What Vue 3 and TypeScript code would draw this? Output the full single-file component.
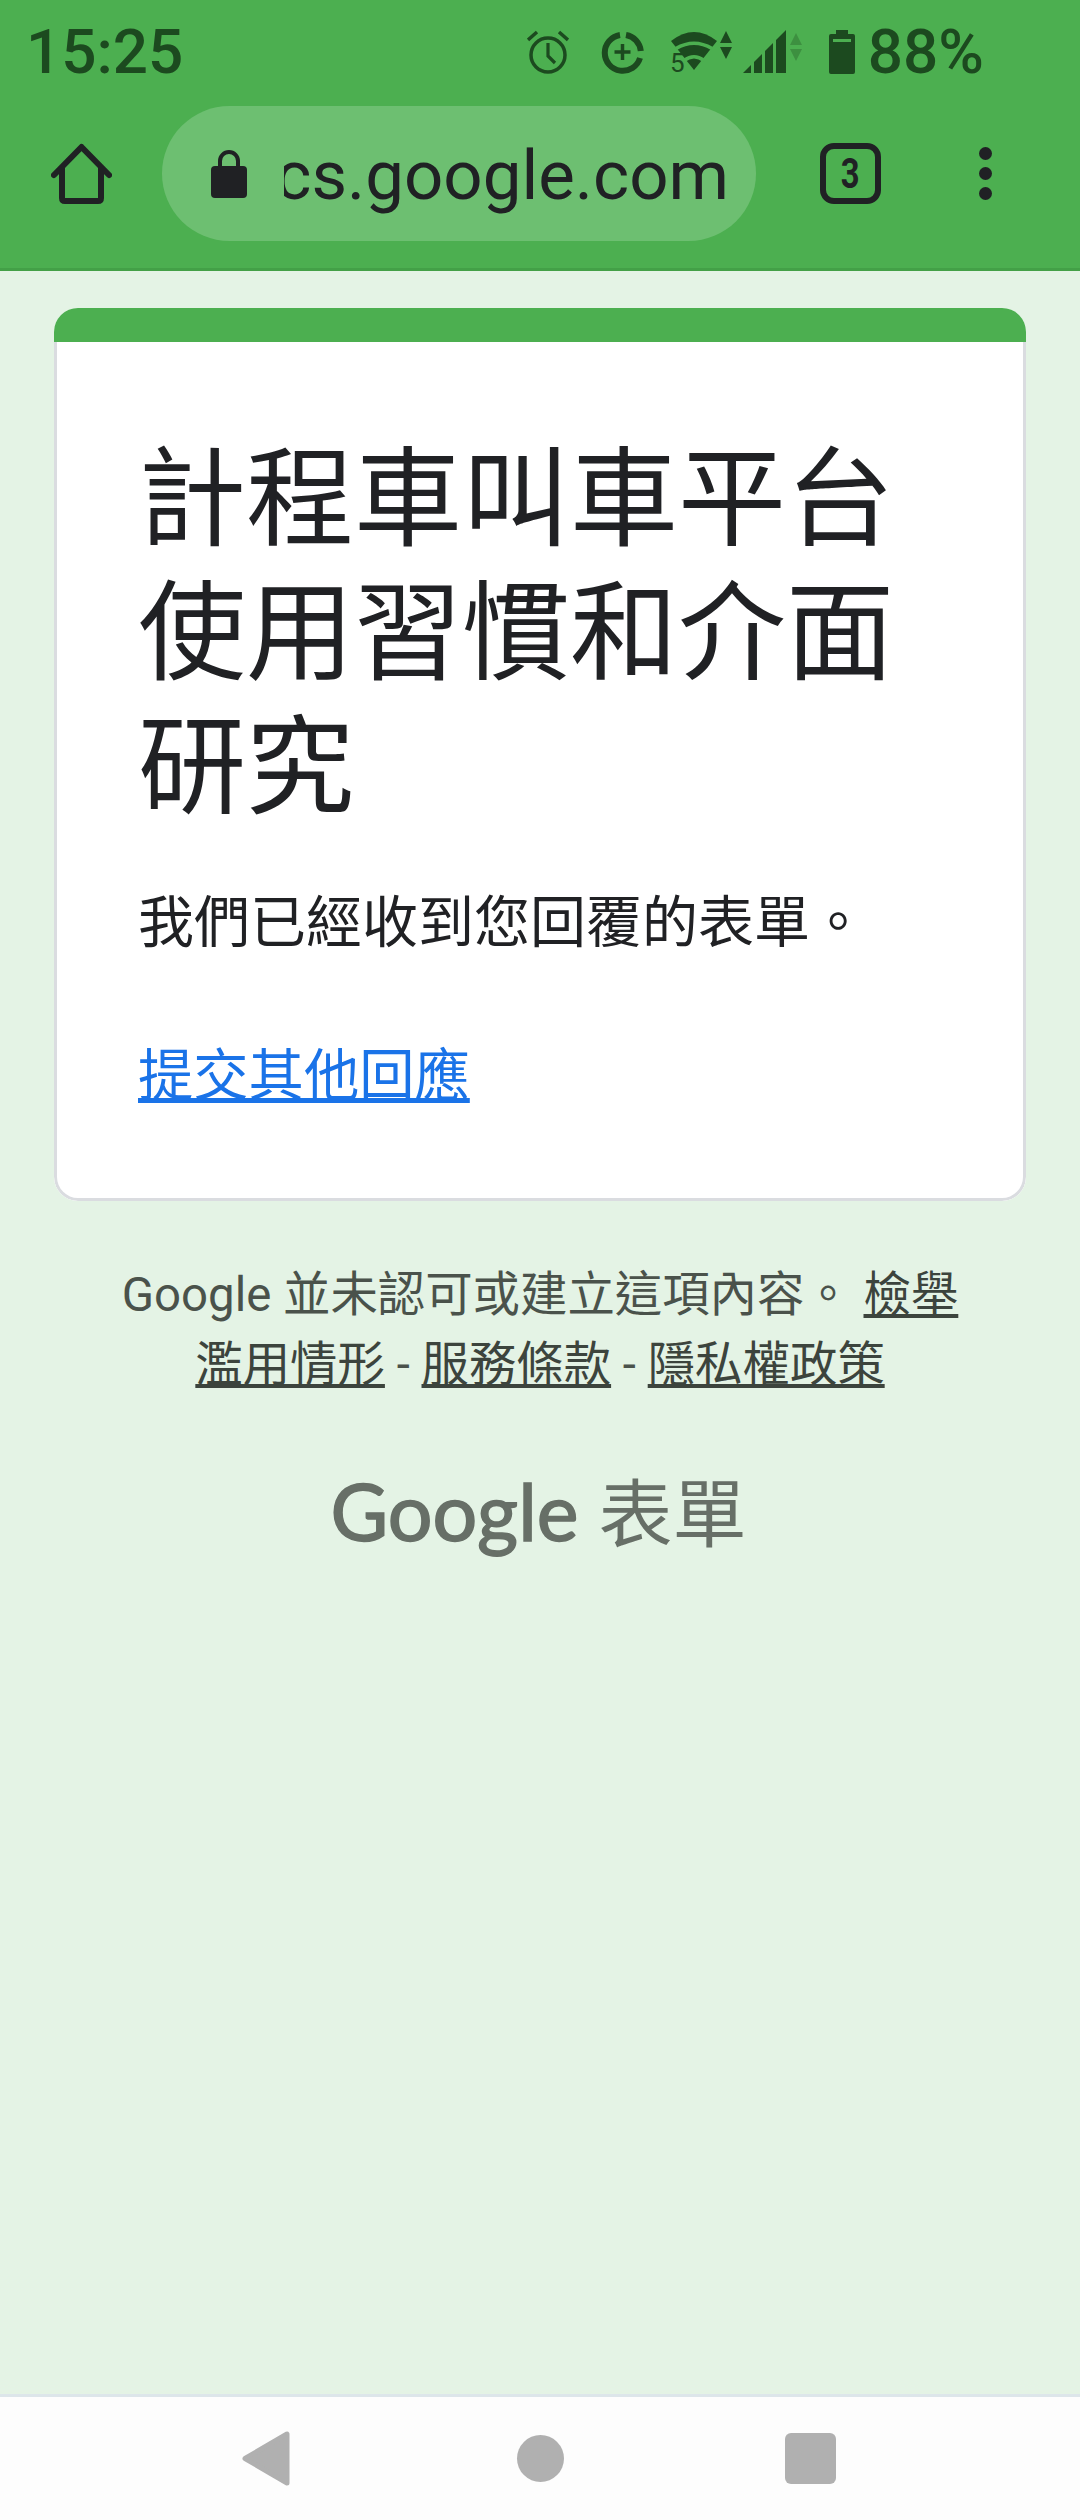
<template>
  <div class="phone">
    <header class="chrome">
      <div class="status">
        <span class="clock">15:25</span>
        <div class="status-icons">
          <svg class="ic-alarm" width="42" height="44" viewBox="0 0 42 44">
            <circle cx="21" cy="25" r="17" fill="none" stroke="currentColor" stroke-width="3.5" />
            <path d="M21 13v13l7 7" fill="none" stroke="currentColor" stroke-width="3.2" />
            <path d="M1 10 10 2M41 10 32 2" fill="none" stroke="currentColor" stroke-width="3.5" />
          </svg>
          <svg class="ic-saver" width="43" height="44" viewBox="0 0 43 44">
            <path d="M19 5A18 18 0 1 0 39 28" fill="none" stroke="currentColor" stroke-width="6" />
            <path d="M25 5A18 18 0 0 1 39.8 21" fill="none" stroke="currentColor" stroke-width="6" />
            <path d="M21.500 14v16M13.500 22h16" fill="none" stroke="currentColor" stroke-width="3.500" />
          </svg>
          <svg class="ic-wifi" width="62" height="44" viewBox="0 0 62 44">
            <path d="M1 11Q24-7 47 11L24 40Z" fill="currentColor" />
            <path d="M5 17Q24 6 43 17L41 20Q24 10 7 20ZM13 29Q24 21 35 29L33 32Q24 25 15 32Z" fill="#4caf50" />
            <text x="0" y="42" class="wifi-five">5</text>
            <path d="M56 1 62 13H50ZM56 29 62 17H50Z" fill="currentColor" />
          </svg>
          <svg class="ic-signal" width="59" height="44" viewBox="0 0 59 44">
            <path d="M0 43 8 35V43ZM11 32 19 24V43H11ZM22 21 30 13V43H22ZM33 10 43 0V43H33Z" fill="currentColor" />
            <path d="M53 3 59 15H47ZM53 31 59 19H47Z" fill="currentColor" opacity=".3" />
          </svg>
          <svg class="ic-battery" width="26" height="44" viewBox="0 0 26 44">
            <path d="M7 0H19V4H24Q26 4 26 6V42Q26 44 24 44H2Q0 44 0 42V6Q0 4 2 4H7Z" fill="currentColor" />
            <rect x="4" y="9" width="18" height="3" fill="#4caf50" />
          </svg>
          <span class="level">88%</span>
        </div>
      </div>
      <div class="toolbar">
        <svg class="home" width="61" height="61" viewBox="0 0 61 61">
          <path d="M3 32 30.500 4 58 32M11 24V55Q11 58 14 58H47Q50 58 50 55V24" fill="none" stroke="#202124" stroke-width="6" stroke-linecap="round" stroke-linejoin="round" />
        </svg>
        <div class="pill">
          <svg class="lock" width="36" height="48" viewBox="0 0 36 48">
            <path d="M9 17V11A9 9 0 0 1 27 11V17" fill="none" stroke="#202124" stroke-width="4" />
            <rect x="0" y="16" width="36" height="32" rx="4" fill="#202124" />
          </svg>
          <div class="url"><span>docs.google.com</span></div>
        </div>
        <div class="tabs"><span>3</span></div>
        <div class="dots"><i></i><i></i><i></i></div>
      </div>
    </header>

    <main class="page">
      <section class="card">
        <div class="card-top"></div>
        <div class="card-body">
          <h1>計程車叫車平台使用習慣和介面研究</h1>
          <p class="done">我們已經收到您回覆的表單。</p>
          <a class="again" href="#">提交其他回應</a>
        </div>
      </section>
      <p class="legal">
        Google 並未認可或建立這項內容。 <a href="#">檢舉濫用情形</a> - <a href="#">服務條款</a> - <a href="#">隱私權政策</a>
      </p>
      <div class="brand"><span class="g">Google</span><span class="b">表單</span></div>
    </main>

    <nav class="nav">
      <svg width="49" height="55" viewBox="0 0 49 55">
        <path d="M45 3V52L3 27.500Z" fill="#b0b0b0" stroke="#b0b0b0" stroke-width="5" stroke-linejoin="round" />
      </svg>
      <span class="circle"></span>
      <span class="square"></span>
    </nav>
  </div>
</template>

<script setup lang="ts">
</script>

<style>
html,
body {
  margin: 0;
  background: #e4f3e5;
}
</style>

<style scoped>
.phone {
  display: flex;
  flex-direction: column;
  min-height: 2520px;
  font-family: Roboto, "Noto Sans CJK TC", sans-serif;
  background: #e4f3e5;
}

.chrome {
  height: 268px;
  border-bottom: 3px solid #43a047;
  background: #4caf50;
  color: #1c4a1f;
}

.status {
  display: flex;
  align-items: center;
  justify-content: space-between;
  height: 104px;
  padding: 0 96px 0 26px;
}

.clock,
.level {
  font-size: 62px;
  font-weight: 500;
  line-height: 72px;
}

.status-icons {
  display: flex;
  align-items: center;
}

.ic-saver {
  margin-left: 32px;
}

.ic-wifi {
  margin-left: 26px;
}

.ic-signal {
  margin-left: 11px;
}

.ic-battery {
  margin-left: 27px;
}

.level {
  margin-left: 13px;
}

.wifi-five {
  font-size: 26px;
  fill: currentColor;
}

.toolbar {
  display: flex;
  align-items: center;
  height: 135px;
  margin-top: 2px;
  padding-left: 51px;
}

.pill {
  display: flex;
  align-items: center;
  width: 594px;
  height: 135px;
  margin-left: 50px;
  border-radius: 68px;
  background: #6dbf71;
}

.lock {
  margin-left: 49px;
}

.url {
  display: flex;
  justify-content: flex-end;
  width: 445px;
  margin-left: 37px;
  padding-top: 5px;
  overflow: hidden;
  font-size: 69px;
  line-height: 80px;
  color: #202124;
  white-space: nowrap;
}

.tabs {
  width: 49px;
  height: 49px;
  margin-left: 64px;
  border: 6px solid #202124;
  border-radius: 14px;
  font-size: 42px;
  font-weight: 700;
  line-height: 49px;
  text-align: center;
  color: #202124;
}

.tabs span {
  display: inline-block;
  transform: scaleX(0.78);
}

.dots {
  display: flex;
  flex-direction: column;
  gap: 7px;
  margin-left: 98px;
}

.dots i {
  width: 13px;
  height: 13px;
  border-radius: 50%;
  background: #202124;
}

.page {
  flex: 1;
  padding-top: 37px;
}

.card {
  width: 972px;
  margin: 0 auto;
  box-sizing: border-box;
  overflow: hidden;
  border-radius: 24px;
  background: #fff;
}

.card-top {
  height: 34px;
  background: #4caf50;
}

.card-body {
  height: 859px;
  box-sizing: border-box;
  padding: 91px 84px 0 81px;
  border: 3px solid #dadce0;
  border-top: 0;
  border-radius: 0 0 24px 24px;
}

h1 {
  margin: 0;
  font-size: 108px;
  font-weight: 400;
  line-height: 134px;
  color: #202124;
}

.done {
  margin: 48px 0 0;
  font-size: 56px;
  line-height: 80px;
  color: #202124;
}

.again {
  display: inline-block;
  margin-top: 74px;
  font-size: 55.300px;
  line-height: 80px;
  color: #1a73e8;
}

.legal {
  width: 880px;
  margin: 59px auto 0;
  font-size: 47.400px;
  line-height: 70px;
  text-align: center;
  color: #4a524b;
}

.legal a {
  color: #3c443d;
}

.brand {
  display: flex;
  align-items: baseline;
  justify-content: center;
  gap: 20px;
  margin-top: 61px;
  padding-right: 3px;
  color: #676f67;
}

.g {
  font-family: Lato, sans-serif;
  font-size: 79px;
  line-height: 100px;
  -webkit-text-stroke: 1.5px #676f67;
}

.b {
  font-size: 74px;
  line-height: 100px;
}

.nav {
  display: flex;
  align-items: center;
  justify-content: center;
  height: 123px;
  padding-right: 2px;
  border-top: 3px solid #dde6ea;
  background: #fdfdfd;
}

.nav svg {
  margin-right: 226px;
}

.circle {
  width: 47px;
  height: 47px;
  border-radius: 50%;
  background: #b0b0b0;
}

.square {
  width: 51px;
  height: 51px;
  margin-left: 221px;
  border-radius: 6px;
  background: #b0b0b0;
}
</style>
